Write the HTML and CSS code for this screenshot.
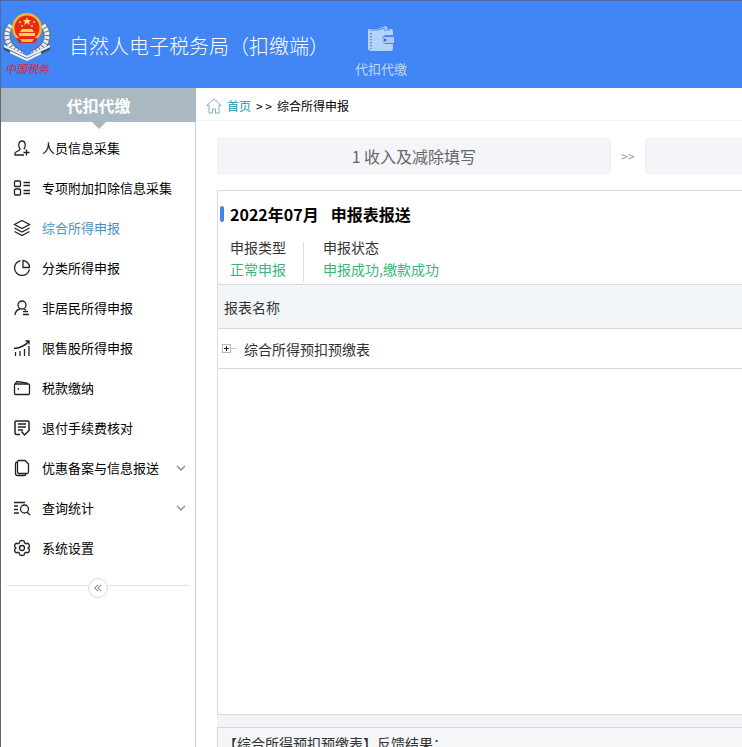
FILE: index.html
```html
<!DOCTYPE html>
<html lang="zh-CN">
<head>
<meta charset="utf-8">
<meta name="viewport" content="width=device-width, initial-scale=1">
<title>自然人电子税务局（扣缴端）</title>
<link rel="stylesheet" href="styles.css">
</head>
<body>
<div class="app">
  <header class="topbar">
    <div class="brand">
      <svg class="emblem" viewBox="0 0 50 50" aria-hidden="true">
        <g fill="none" stroke="#5d7186" stroke-width="7">
          <path d="M9 14C1 24 5 37 20 43"/><path d="M41 14c8 10 4 23-11 29"/>
        </g>
        <g fill="none" stroke="#e9eff2" stroke-width="5" stroke-dasharray="3 1">
          <path d="M9 14C1 24 5 37 20 43"/><path d="M41 14c8 10 4 23-11 29"/>
        </g>
        <path d="M1 35l4 0 20 10 20-10 4 0-1 4-23 11L2 39z" fill="#38536f"/>
        <path d="M2 35l23 11 23-11M8 41l17 8 14-7" fill="none" stroke="#eef3f5" stroke-width="2"/>
        <circle cx="25" cy="17" r="15" fill="#f4b532"/>
        <circle cx="25" cy="17" r="12.500" fill="#e62b18"/>
        <path d="M25 6l1 3h3l-2 2 1 3-3-2-3 2 1-3-2-2h3z" fill="#ffe36b"/>
        <g fill="#ffd84f"><circle cx="18" cy="11" r="1"/><circle cx="32" cy="11" r="1"/><circle cx="20" cy="15" r="1"/><circle cx="30" cy="15" r="1"/>
        <path d="M20 18h10l2 3H18zM17 22h16v3H17z"/></g>
        <path d="M14 27h22l-3 5H17z" fill="#d9291b"/>
        <path d="M18 28h14l-2 3H20z" fill="#f6ba39"/>
      </svg>
      <span class="emblem-text">中国税务</span>
    </div>
    <h1 class="app-title">自然人电子税务局（扣缴端）</h1>
    <a class="module" href="#">
      <svg class="module-icon" viewBox="0 0 28 28" aria-hidden="true">
        <path d="M2 4h8l9-3 2 3h3q2 0 2 2v4h-6q-5 0-5 4.500t5 4.500h6v5q0 2-2 2H4q-3 0-3-3V6q0-2 1-2z" fill="#b5d2fb"/>
        <path d="M3 5h7l8-2M17 5h6" fill="none" stroke="#4285f4"/>
        <path d="M4 8v16" fill="none" stroke="#4f83d6" stroke-width="1.500" stroke-dasharray="1.500 1.500"/>
        <path d="M18 12h9v6h-9q-3 0-3-3t3-3z" fill="#a9cbfa"/>
        <circle cx="18" cy="15" r="1.500" fill="#326dcc"/>
      </svg>
      <span>代扣代缴</span>
    </a>
  </header>

  <div class="body">
    <aside class="sidebar">
      <h2 class="sidebar-title">代扣代缴</h2>
      <nav class="menu">
        <a class="menu-item" href="#"><svg class="icon" viewBox="0 0 16 16"><path d="M10.500 9.500C10 9 10 8.500 10.500 8 12 6.500 11.500 1 8 1S4 6.500 5.500 8c1 1 .5 2-.5 2.500L2 12q-1.500 1-1 3h9M12.500 9.500v6M9.500 12.500h6"/></svg><span>人员信息采集</span></a>
        <a class="menu-item" href="#"><svg class="icon" viewBox="0 0 16 16"><rect x=".5" y="1" width="6" height="5.500" rx="1"/><rect x=".5" y="9" width="6" height="6" rx="1"/><path d="M9.500 2.500H16M9.500 5.500H16M9.500 10.500H16M9.500 13.500H16"/></svg><span>专项附加扣除信息采集</span></a>
        <a class="menu-item menu-item-active" href="#"><svg class="icon" viewBox="0 0 16 16"><path d="M8 .5l7.500 4L8 8.500.5 4.500zM.5 8L8 12l7.500-4M.5 11.500L8 15.500l7.500-4"/></svg><span>综合所得申报</span></a>
        <a class="menu-item" href="#"><svg class="icon" viewBox="0 0 16 16"><path d="M6.500.6A7.500 7.500 0 1 0 15.400 9.500M9 .5V7.500h6.500A7 7 0 0 0 9 .5z"/></svg><span>分类所得申报</span></a>
        <a class="menu-item" href="#"><svg class="icon" viewBox="0 0 16 16"><circle cx="8" cy="5" r="4"/><path d="M1 15q.5-5 5-6M10 9l2 1M9 11.500h5M9 14.500h6"/></svg><span>非居民所得申报</span></a>
        <a class="menu-item" href="#"><svg class="icon" viewBox="0 0 16 16"><path d="M1.500 12v4M6 11v5M10.500 9v7M15 6v10M0 8.500Q10 7.500 15 1M11.500 1H15v3.500"/></svg><span>限售股所得申报</span></a>
        <a class="menu-item" href="#"><svg class="icon" viewBox="0 0 16 16"><rect x=".5" y="4" width="15" height="10.500" rx="1"/><path d="M1 4l2-2.500L13 3v1M3.500 9h1.500"/></svg><span>税款缴纳</span></a>
        <a class="menu-item" href="#"><svg class="icon" viewBox="0 0 16 16"><path d="M6 14.500H2.500q-1.500 0-1.500-1.500V2Q1 1 2 1h12q1 0 1 1v8M4 4h8M4 7h8M4 10h5M7.500 11.500l3 3.500 5-5" stroke-width="1.500"/></svg><span>退付手续费核对</span></a>
        <a class="menu-item" href="#"><svg class="icon" viewBox="0 0 16 16"><path d="M5 .5h6l3.500 3.500v8q0 1.500-1.500 1.500H5q-1.500 0-1.500-1.500V2Q3.500.5 5 .5zM3.500 2Q1.500 2 1.500 4v9.500q0 2 2 2H10q2 0 2-2"/></svg><span>优惠备案与信息报送</span><svg class="chevron" viewBox="0 0 10 10"><path d="M1 3l4 4 4-4"/></svg></a>
        <a class="menu-item" href="#"><svg class="icon" viewBox="0 0 16 16"><path d="M0 2.500h11M0 6h4M0 9.500h4M0 13h5M13 12l3 3"/><circle cx="10.500" cy="9" r="4"/></svg><span>查询统计</span><svg class="chevron" viewBox="0 0 10 10"><path d="M1 3l4 4 4-4"/></svg></a>
        <a class="menu-item" href="#"><svg class="icon" viewBox="0 0 16 16"><path d="M6 1q2-1 4 0l.7 2 1.300.7 2-.4q1.600 1.700 1.500 3.500L14 8l1.500 1.500q0 2-1.500 3.300l-2-.5-1.300.7L10 15q-2 1-4 0l-.7-2-1.300-.7-2 .5Q.5 11.500.5 9.500L2 8 .5 6.500Q.6 4.500 2 3.300l2 .4L5.300 3z"/><circle cx="8" cy="8" r="2.500"/></svg><span>系统设置</span></a>
      </nav>
      <div class="collapse">
        <button class="collapse-button" type="button" aria-label="收起菜单"><svg viewBox="0 0 10 10"><path d="M5 1L1 5l4 4M9 1L5 5l4 4"/></svg></button>
      </div>
    </aside>

    <main class="main">
      <div class="breadcrumb">
        <svg class="home" viewBox="0 0 16 16" aria-hidden="true"><path d="M3 7.500H.8L8 .8l7.200 6.700H13v7.500H9.500v-4h-3v4H3z"/></svg>
        <a href="#">首页</a><span>&gt; &gt;</span><span>综合所得申报</span>
      </div>
      <div class="content">
        <div class="steps">
          <div class="step">1 收入及减除填写</div>
          <div class="step-arrow">&gt;&gt;</div>
          <div class="step"></div>
        </div>
        <section class="panel">
          <h3 class="panel-title"><span>2022年07月</span><span>申报表报送</span></h3>
          <dl class="status">
            <div class="status-item"><dt>申报类型</dt><dd>正常申报</dd></div>
            <div class="status-item"><dt>申报状态</dt><dd>申报成功,缴款成功</dd></div>
          </dl>
          <table class="reports">
            <thead><tr><th>报表名称</th></tr></thead>
            <tbody><tr><td><div class="tree-row"><button class="expand" type="button" aria-label="展开"></button><span>综合所得预扣预缴表</span></div></td></tr></tbody>
          </table>
        </section>
        <section class="feedback">【综合所得预扣预缴表】反馈结果：</section>
      </div>
    </main>
  </div>
</div>
</body>
</html>
```
FILE: styles.css
```css
* { box-sizing: border-box; }

body {
  margin: 0;
  font-family: "Noto Sans CJK SC", sans-serif;
  font-size: 14px;
  line-height: 20px;
  color: #333;
  background: #fff;
}

h1, h2, h3, dl, dd { margin: 0; font-weight: normal; }
a { color: inherit; text-decoration: none; }
button { padding: 0; font: inherit; background: #fff; }
svg { display: block; flex: none; }

.app {
  display: flex;
  flex-direction: column;
  height: 100vh;
  overflow: hidden;
}

.topbar {
  display: flex;
  flex: none;
  height: 88px;
  border-top: 1px solid #4d6aa6;
  border-left: 1px solid #4d6aa6;
  background: #4285f4;
  color: #fff;
}

.brand {
  display: flex;
  flex-direction: column;
  align-items: center;
  width: 52px;
  padding-top: 10px;
}

.emblem { width: 50px; height: 50px; }

.emblem-text {
  color: #d3273c;
  font-size: 11px;
  font-style: italic;
  line-height: 14px;
}

.app-title {
  padding: 30px 0 0 16px;
  font-size: 20px;
  font-weight: 300;
  line-height: 30px;
  white-space: nowrap;
}

.module {
  display: flex;
  flex-direction: column;
  align-items: center;
  margin-left: 26px;
  padding-top: 24px;
  color: #c0d8fc;
  font-size: 13px;
  white-space: nowrap;
}

.module-icon { width: 28px; height: 28px; margin-bottom: 6px; }

.body { display: flex; flex: 1; min-height: 0; }

.sidebar {
  flex: none;
  width: 196px;
  border-left: 1px solid #666;
  border-right: 1px solid #cdd0d2;
}

.sidebar-title {
  position: relative;
  height: 34px;
  margin-right: -1px;
  background: #aab9c1;
  color: #fff;
  font-size: 16px;
  font-weight: bold;
  line-height: 34px;
  text-align: center;
}

.sidebar-title::after {
  content: "";
  position: absolute;
  top: 100%;
  left: 50%;
  margin-left: -7px;
  border: 7px solid transparent;
  border-top-color: #aab9c1;
  border-bottom: 0;
}

.menu { padding-top: 6px; }

.menu-item {
  display: flex;
  align-items: center;
  gap: 12px;
  height: 40px;
  padding: 0 9px 0 13px;
  color: #000;
  font-size: 13px;
  white-space: nowrap;
}

.menu-item-active { color: #4593bd; }

.icon, .chevron, .home, .collapse-button svg {
  fill: none;
  stroke: #222;
  stroke-width: 1.3;
}

.icon { width: 16px; height: 16px; overflow: visible; }
.chevron { width: 10px; height: 10px; margin-left: auto; stroke: #888; }

.collapse {
  display: flex;
  align-items: flex-start;
  margin: 10px 6px 0;
}

.collapse::before, .collapse::after {
  content: "";
  flex: 1;
  margin-top: 7px;
  border-top: 1px solid #dfe1e3;
}

.collapse-button {
  display: grid;
  place-items: center;
  width: 20px;
  height: 20px;
  border: 1px solid #d5d8da;
  border-radius: 50%;
}

.collapse-button svg { width: 8px; height: 8px; stroke: #888; }

.main { display: flex; flex: 1; flex-direction: column; min-width: 0; }

.breadcrumb {
  display: flex;
  flex: none;
  align-items: center;
  gap: 5px;
  height: 33px;
  padding: 4px 0 0 10px;
  border-bottom: 1px solid #eff1f3;
  color: #000;
  font-size: 12px;
}

.breadcrumb a { color: #1996b3; }
.home { width: 16px; height: 16px; stroke: #80aebb; stroke-width: 1; }

.content {
  display: flex;
  flex: 1;
  flex-direction: column;
  min-height: 0;
  padding: 17px 0 0 21px;
}

.steps { display: flex; flex: none; height: 36px; overflow: hidden; }

.step {
  flex: 0 0 75%;
  border: 1px solid #edf0f3;
  border-radius: 2px;
  background: #f3f5f9;
  color: #666;
  font-size: 16px;
  line-height: 34px;
  text-align: center;
}

.step-arrow {
  flex: 0 0 34px;
  color: #999;
  font-size: 12px;
  line-height: 36px;
  text-align: center;
}

.panel {
  flex: 1;
  margin-top: 16px;
  border: 1px solid #d9dcdf;
  border-right: 0;
}

.panel-title {
  display: flex;
  align-items: center;
  gap: 12px;
  padding: 11px 0 0 2px;
  color: #000;
  font-size: 16px;
  font-weight: bold;
  line-height: 24px;
}

.panel-title::before {
  content: "";
  width: 4px;
  height: 16px;
  margin-right: -6px;
  border-radius: 2px;
  background: #4285e8;
}

.status { display: flex; padding: 10px 0 2px 12px; }
.status-item { height: 46px; padding-right: 17px; line-height: 22px; }
.status-item dd { color: #3db37a; }
.status-item + .status-item {
  height: 40px;
  margin-top: 6px;
  padding-left: 19px;
  border-left: 1px solid #dddfe1;
}
.status-item + .status-item dt { margin-top: -6px; }

.reports { width: 100%; border-collapse: collapse; }

.reports th, .reports td {
  padding: 0 6px;
  border-bottom: 1px solid #d5d9dc;
  font-weight: normal;
  text-align: left;
}

.reports th {
  height: 44px;
  border-top: 1px solid #d5d9dc;
  background: #f3f6f9;
}

.reports td { height: 40px; padding-left: 4px; }
.tree-row { display: flex; align-items: center; }

.expand {
  position: relative;
  width: 9px;
  height: 9px;
  margin-right: 13px;
  border: 1px solid #aebab8;
  background:
    linear-gradient(#222, #222) center / 5px 1px no-repeat,
    linear-gradient(#222, #222) center / 1px 5px no-repeat;
}

.expand::after {
  content: "";
  position: absolute;
  top: 3px;
  left: 8px;
  width: 6px;
  border-top: 1px solid #ccd3d2;
}

.feedback {
  flex: none;
  height: 32px;
  padding: 6px 0 0 6px;
  border-top: 12px solid #f2f4f6;
  background: #f4f6f8;
  box-shadow: inset 1px 1px #d5d9dc;
  overflow: hidden;
}
```
